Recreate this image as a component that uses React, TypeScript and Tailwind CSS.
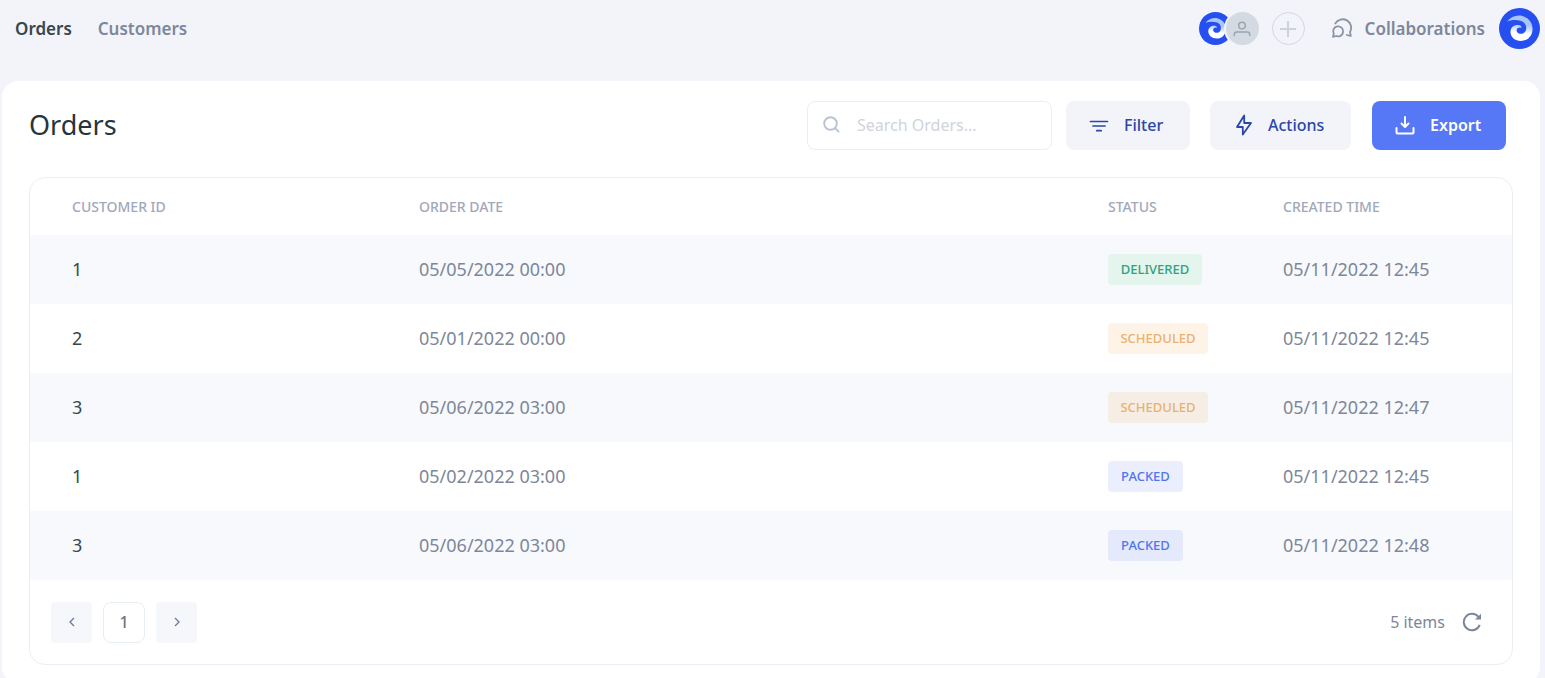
import React, { useId, useState } from "react";

type Status = "Delivered" | "Scheduled" | "Packed";

interface Order {
  customerId: number;
  orderDate: string;
  status: Status;
  createdTime: string;
}

const orders: Order[] = [
  { customerId: 1, orderDate: "05/05/2022 00:00", status: "Delivered", createdTime: "05/11/2022 12:45" },
  { customerId: 2, orderDate: "05/01/2022 00:00", status: "Scheduled", createdTime: "05/11/2022 12:45" },
  { customerId: 3, orderDate: "05/06/2022 03:00", status: "Scheduled", createdTime: "05/11/2022 12:47" },
  { customerId: 1, orderDate: "05/02/2022 03:00", status: "Packed", createdTime: "05/11/2022 12:45" },
  { customerId: 3, orderDate: "05/06/2022 03:00", status: "Packed", createdTime: "05/11/2022 12:48" },
];

const statusStyles: Record<Status, string> = {
  Delivered: "w-[94px] bg-[#e3f5ed] text-[#30a183]",
  Scheduled: "w-[100px] bg-[#f0a13c]/12 text-[#e9b170]",
  Packed: "w-[75px] bg-[#3f66f0]/10 text-[#5075ef]",
};

function WaveLogo({ className }: { className: string }) {
  const gradient = useId();
  return (
    <svg viewBox="0 0 41 41" className={className} aria-hidden="true">
      <defs>
        <linearGradient id={gradient} x1="0.3" y1="0" x2="0.15" y2="1">
          <stop offset="0.3" stopColor="#a9c4fb" />
          <stop offset="0.65" stopColor="#ffffff" />
        </linearGradient>
      </defs>
      <circle cx="20.5" cy="20.5" r="20.5" fill="#254ff0" />
      <path
        d="M8 13.5C12 8.500 18 6.500 23.500 8C30 9.800 34 15.500 33.500 22C33 28.500 28 33 22 33C16 33 11.500 29 11.500 24C11.500 19 15.500 16.500 19.500 17C21.500 17.300 22.800 18.500 22.300 19.700C19 18.500 17 21 17.800 23.200C19 26.500 24 26.800 26.300 23.500C28.800 19.500 26.500 14 21.500 12.800C17 11.500 12 12 8 13.500Z"
        fill={`url(#${gradient})`}
      />
    </svg>
  );
}

function PersonIcon() {
  return (
    <svg viewBox="0 0 20 20" className="size-5" fill="none" stroke="#9ba5b4" strokeWidth="1.500" strokeLinecap="round">
      <circle cx="10" cy="6.500" r="3.300" />
      <path d="M2.300 16.500v-1a2.500 2.500 0 0 1 2.500-2.500h10.400a2.500 2.500 0 0 1 2.500 2.500v1" />
    </svg>
  );
}

function ChatIcon() {
  return (
    <svg viewBox="0 0 22 22" className="size-[22px]" fill="none" stroke="#8a93a5" strokeWidth="1.800" strokeLinecap="round" strokeLinejoin="round">
      <path d="M4.300 5.500A8.300 8.300 0 0 1 19 14L19.800 18L15.800 17" />
      <path d="M2 18.800L2.700 15.700A5 5 0 1 1 5.200 18Z" />
    </svg>
  );
}

function SearchIcon() {
  return (
    <svg viewBox="0 0 18 18" className="size-[18px] shrink-0" fill="none" stroke="#b9c2d4" strokeWidth="1.900" strokeLinecap="round">
      <circle cx="7.500" cy="7.500" r="6.300" />
      <path d="M12.300 12.400L15.500 15.500" />
    </svg>
  );
}

function FilterIcon() {
  return (
    <svg viewBox="0 0 20 20" className="size-5" fill="none" stroke="currentColor" strokeWidth="1.700" strokeLinecap="round">
      <path d="M1.500 6.500h17M4 11h12M7.800 15.700h4.400" />
    </svg>
  );
}

function BoltIcon() {
  return (
    <svg viewBox="0 0 20 22" className="h-[22px] w-5" fill="none" stroke="currentColor" strokeWidth="1.800" strokeLinejoin="round">
      <path d="M11.200 1.500L4 13h5.800v7.500L18 9h-6.800Z" />
    </svg>
  );
}

function DownloadIcon() {
  return (
    <svg viewBox="0 0 20 20" className="size-5" fill="none" stroke="currentColor" strokeWidth="2" strokeLinecap="round" strokeLinejoin="round">
      <path d="M10 2v9.500M6.500 8.500l3.500 3.500l3.500-3.500M1.500 13v4.500a1 1 0 0 0 1 1h15a1 1 0 0 0 1-1V13" />
    </svg>
  );
}

function Chevron({ direction }: { direction: "left" | "right" }) {
  return (
    <svg viewBox="0 0 10 12" className="h-3 w-2.5" fill="none" stroke="#697a96" strokeWidth="1.300">
      <path d={direction === "left" ? "M7 2L3 6l4 4" : "M3 2l4 4l-4 4"} />
    </svg>
  );
}

function RefreshIcon() {
  return (
    <svg viewBox="0 0 20 20" className="size-5" fill="none" stroke="#7d879b" strokeWidth="2">
      <path d="M17.700 12.800A8.200 8.200 0 1 1 16.500 5" />
      <path d="M19 1.800V7.500H13Z" fill="#7d879b" stroke="none" />
    </svg>
  );
}

function TopBar() {
  return (
    <header className="flex h-[57px] items-center justify-between pr-[5px] pl-[15px] text-[17px] font-semibold">
      <nav className="flex gap-[26px]">
        <a href="#orders" aria-current="page" className="text-[#38464d]">Orders</a>
        <a href="#customers" className="text-[#7d879b]">Customers</a>
      </nav>
      <div className="flex items-center">
        <div className="flex items-center">
          <WaveLogo className="size-[33px]" />
          <span className="z-10 -ml-2 flex size-[37px] items-center justify-center rounded-full border-2 border-[#f3f4f9] bg-[#d3dae2]">
            <PersonIcon />
          </span>
        </div>
        <button aria-label="Add collaborator" className="ml-[11px] flex size-[33px] items-center justify-center rounded-full border border-[#d0d8e2]">
          <svg viewBox="0 0 16 16" className="size-4" stroke="#ccd1da" strokeWidth="2">
            <path d="M8 0v16M0 8h16" />
          </svg>
        </button>
        <a href="#collaborations" className="ml-[26px] flex items-center gap-3 text-[#7d879b]">
          <ChatIcon />
          Collaborations
        </a>
        <button aria-label="Account" className="ml-[14px]">
          <WaveLogo className="size-[41px]" />
        </button>
      </div>
    </header>
  );
}

function Toolbar() {
  const [query, setQuery] = useState("");
  const button = "flex h-[49px] items-center gap-[15px] rounded-lg pb-0.5 pl-[23px] text-base";
  return (
    <div className="flex items-center pr-[7px]">
      <h1 className="mr-auto pb-0.5 text-[27px] leading-[47px] text-[#27343b]">Orders</h1>
      <label className="flex h-[49px] w-[245px] items-center gap-4 rounded-lg border border-[#eceef5] px-[15px] pb-0.5">
        <SearchIcon />
        <input
          type="text"
          aria-label="Search orders"
          placeholder="Search Orders..."
          value={query}
          onChange={(event) => setQuery(event.target.value)}
          className="w-full min-w-0 text-base text-[#38464d] outline-none placeholder:text-[#d0d3dc]"
        />
      </label>
      <button className={`${button} ml-[14px] w-[124px] bg-[#f3f4fa] font-medium text-[#2a47a6]`}>
        <FilterIcon />
        Filter
      </button>
      <button className={`${button} ml-5 w-[141px] bg-[#f3f4fa] font-medium text-[#2a47a6]`}>
        <BoltIcon />
        Actions
      </button>
      <button className={`${button} ml-[21px] w-[134px] bg-[#5677f6] font-semibold text-white`}>
        <DownloadIcon />
        Export
      </button>
    </div>
  );
}

function OrdersTable() {
  return (
    <table className="w-full table-fixed border-collapse text-left">
      <thead>
        <tr className="h-[57px] text-[14px] text-[#a0a8ba] uppercase">
          <th scope="col" className="w-[389px] pl-[42px] font-medium">Customer ID</th>
          <th scope="col" className="font-medium">Order date</th>
          <th scope="col" className="w-[175px] font-medium">Status</th>
          <th scope="col" className="w-[229px] font-medium">Created time</th>
        </tr>
      </thead>
      <tbody>
        {orders.map((order, index) => (
          <tr key={index} className="h-[69px] text-[18px] text-[#7d8799] odd:bg-[#f8f9fd]">
            <td className="pl-[42px] text-[#38464d]">{order.customerId}</td>
            <td>{order.orderDate}</td>
            <td>
              <span className={`flex h-[31px] items-center justify-center rounded text-[13px] font-medium uppercase ${statusStyles[order.status]}`}>
                {order.status}
              </span>
            </td>
            <td>{order.createdTime}</td>
          </tr>
        ))}
      </tbody>
    </table>
  );
}

function TableFooter() {
  const pageButton = "flex h-[41px] items-center justify-center";
  return (
    <footer className="flex h-[84px] items-center justify-between pr-[30px] pl-[21px]">
      <nav aria-label="Pagination" className="flex gap-[11px]">
        <button aria-label="Previous page" className={`${pageButton} w-[41px] rounded bg-[#f6f7fb]`}>
          <Chevron direction="left" />
        </button>
        <button aria-current="page" className={`${pageButton} w-[42px] rounded-lg border border-[#e6edf3] text-base font-medium text-[#6c7580]`}>
          1
        </button>
        <button aria-label="Next page" className={`${pageButton} w-[41px] rounded bg-[#f6f7fb]`}>
          <Chevron direction="right" />
        </button>
      </nav>
      <div className="flex items-center gap-[17px] text-base text-[#7d8799]">
        5 items
        <button aria-label="Refresh">
          <RefreshIcon />
        </button>
      </div>
    </footer>
  );
}

export default function App() {
  return (
    <div className="min-h-screen bg-[#f3f4f9] font-['Noto_Sans',sans-serif]">
      <TopBar />
      <main className="mt-6 mr-[5px] ml-[2px] rounded-2xl bg-white px-[27px] pt-5 pb-[18px]">
        <Toolbar />
        <section className="mt-[27px] overflow-hidden rounded-2xl border border-[#eceef5]">
          <OrdersTable />
          <TableFooter />
        </section>
      </main>
    </div>
  );
}
